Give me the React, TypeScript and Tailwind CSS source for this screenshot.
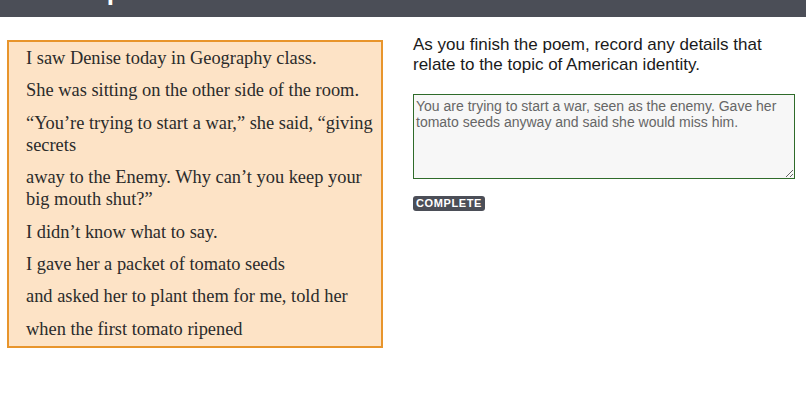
export default function App() {
	const lines: string[] = [
		"I saw Denise today in Geography class.",
		"She was sitting on the other side of the room.",
		"\u201CYou\u2019re trying to start a war,\u201D she said, \u201Cgiving secrets",
		"away to the Enemy. Why can\u2019t you keep your big mouth shut?\u201D",
		"I didn\u2019t know what to say.",
		"I gave her a packet of tomato seeds",
		"and asked her to plant them for me, told her",
		"when the first tomato ripened",
	];

	return (
		<div className="w-[806px] h-[400px] bg-white overflow-hidden font-['Liberation_Sans',sans-serif]">
			<div className="h-[17px] bg-[#4b4e57] overflow-hidden relative">
				<h1 className="absolute left-[88px] top-[-24px] text-[26px] font-bold text-white leading-[30px]">
					Up
				</h1>
			</div>
			<div className="flex flex-row pt-[23px] pl-[7px]">
				<div className="w-[376px] border-2 border-[#e8952c] bg-[#fde3c6] pl-[17px] pr-[4px] pt-[5px] pb-[6px] font-['Liberation_Serif',serif] text-[18.4px] leading-[22px] text-[#2b2b2b] flex flex-col gap-[10.4px]">
					{lines.map((l, i) => (
						<p key={i}>{l}</p>
					))}
				</div>
				<div className="ml-[30px] mt-[-5px] w-[382px] flex flex-col">
					<p className="text-[17px] leading-[20px] text-[#1a1a1a]">
						As you finish the poem, record any details that relate to the topic of American identity.
					</p>
					<textarea
						className="block mt-[19px] h-[85px] w-full border border-[#2f6b2a] bg-[#f7f7f7] px-[2px] pt-[3px] pb-[1px] text-[14px] leading-[16px] text-[#666] font-['Liberation_Sans',sans-serif]"
						defaultValue="You are trying to start a war, seen as the enemy. Gave her tomato seeds anyway and said she would miss him."
					/>
					<div className="mt-[17px]">
						<button
							type="button"
							className="block bg-[#4b4e57] text-white text-[11px] font-bold leading-[15px] px-[3px] rounded-[3px] tracking-[0.6px]"
						>
							COMPLETE
						</button>
					</div>
				</div>
			</div>
		</div>
	);
}
